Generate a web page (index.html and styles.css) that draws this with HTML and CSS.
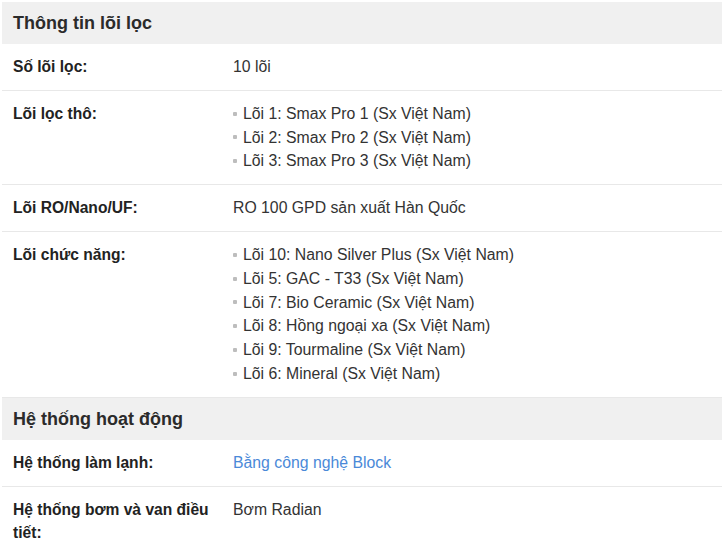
FILE: index.html
```html
<!DOCTYPE html>
<html lang="vi">
<head>
<meta charset="utf-8">
<title>Thông số</title>
<link rel="stylesheet" href="styles.css">
</head>
<body>
<div class="spec">
  <div class="spec-head">Thông tin lõi lọc</div>
  <div class="spec-row">
    <div class="spec-label">Số lõi lọc:</div>
    <div class="spec-value">10 lõi</div>
  </div>
  <div class="spec-row">
    <div class="spec-label">Lõi lọc thô:</div>
    <div class="spec-value">
      <ul class="spec-list">
        <li>Lõi 1: Smax Pro 1 (Sx Việt Nam)</li>
        <li>Lõi 2: Smax Pro 2 (Sx Việt Nam)</li>
        <li>Lõi 3: Smax Pro 3 (Sx Việt Nam)</li>
      </ul>
    </div>
  </div>
  <div class="spec-row">
    <div class="spec-label">Lõi RO/Nano/UF:</div>
    <div class="spec-value">RO 100 GPD sản xuất Hàn Quốc</div>
  </div>
  <div class="spec-row">
    <div class="spec-label">Lõi chức năng:</div>
    <div class="spec-value">
      <ul class="spec-list">
        <li>Lõi 10: Nano Silver Plus (Sx Việt Nam)</li>
        <li>Lõi 5: GAC - T33 (Sx Việt Nam)</li>
        <li>Lõi 7: Bio Ceramic (Sx Việt Nam)</li>
        <li>Lõi 8: Hồng ngoại xa (Sx Việt Nam)</li>
        <li>Lõi 9: Tourmaline (Sx Việt Nam)</li>
        <li>Lõi 6: Mineral (Sx Việt Nam)</li>
      </ul>
    </div>
  </div>
  <div class="spec-head">Hệ thống hoạt động</div>
  <div class="spec-row">
    <div class="spec-label">Hệ thống làm lạnh:</div>
    <div class="spec-value"><a class="spec-link" href="#">Bằng công nghệ Block</a></div>
  </div>
  <div class="spec-row">
    <div class="spec-label">Hệ thống bơm và van điều tiết:</div>
    <div class="spec-value">Bơm Radian</div>
  </div>
</div>
</body>
</html>
```

FILE: styles.css
```css
html, body {
  margin: 0;
  padding: 0;
  background: #ffffff;
}

body {
  font-family: "Liberation Sans", Arial, sans-serif;
  color: #333333;
  overflow: hidden;
}

.spec {
  margin: 2px 0 0 2px;
  display: flex;
  flex-direction: column;
}

.spec-head {
  background: #f0f0f0;
  height: 42px;
  line-height: 42px;
  padding: 0 11px;
  font-size: 18px;
  font-weight: bold;
  color: #2b2b2b;
}

.spec-row {
  display: grid;
  grid-template-columns: 220px 1fr;
  border-bottom: 1px solid #e8e8e8;
}

.spec-row:last-child {
  border-bottom: none;
}

.spec-label {
  padding: 11px 2px 11px 11px;
  font-size: 15.6px;
  line-height: 23.8px;
  font-weight: bold;
  color: #222222;
}

.spec-value {
  padding: 11px;
  font-size: 15.8px;
  line-height: 23.8px;
  color: #333333;
}

.spec-list {
  list-style: none;
  margin: 0;
  padding: 0;
}

.spec-list li {
  display: flex;
  align-items: center;
}

.spec-list li::before {
  content: "";
  width: 4px;
  height: 4px;
  border-radius: 1px;
  background: #bdbdbd;
  margin-right: 6px;
  flex: none;
}

.spec-link {
  color: #4a89d8;
  text-decoration: none;
}
```
